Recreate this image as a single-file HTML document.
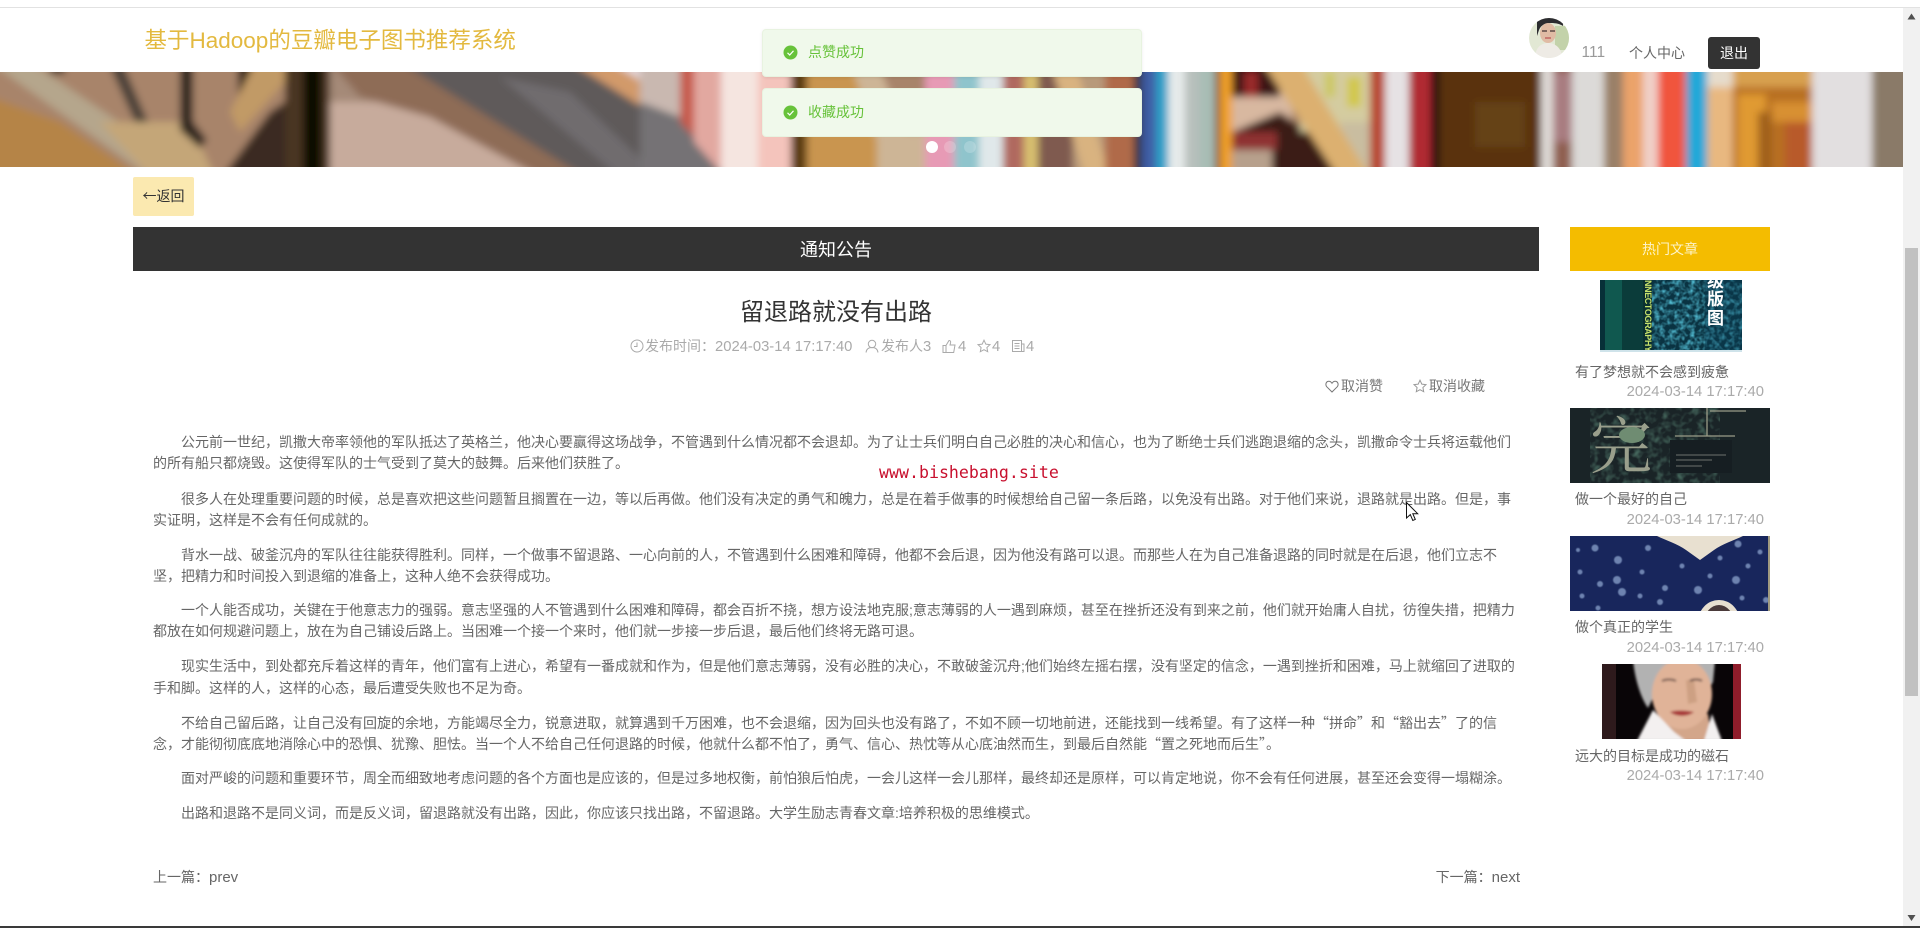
<!DOCTYPE html>
<html lang="zh-CN">
<head>
<meta charset="utf-8">
<title>留退路就没有出路</title>
<style>
html,body{margin:0;padding:0;background:#fff;}
body{position:relative;width:1920px;height:928px;overflow:hidden;font-family:"Liberation Sans","Noto Sans CJK SC",sans-serif;}
.a{position:absolute;white-space:nowrap;}
.l{position:absolute;white-space:nowrap;font-size:14px;line-height:20px;color:#666;left:153px;}
.i{left:181px;}
.m{position:absolute;white-space:nowrap;font-size:14px;line-height:20px;color:#aaa;top:336px;}
.m b{font-weight:normal;font-size:14.8px;}
.t{position:absolute;white-space:nowrap;font-size:14px;line-height:20px;color:#666;left:1575px;}
.d{position:absolute;white-space:nowrap;font-size:14.8px;line-height:20px;color:#aaa;right:156px;}
.q{font-family:"Noto Sans CJK SC",sans-serif;}
svg{position:absolute;display:block;}
.ic{fill:none;stroke:#aaa;stroke-width:1;}
</style>
</head>
<body>

<!-- top strip -->
<div class="a" style="left:0;top:7px;width:1920px;height:1px;background:#e2e2e2"></div>

<!-- banner -->
<svg style="left:0;top:72px" width="1903" height="95" viewBox="0 0 1903 95">
<defs><filter id="bl" x="-5%" y="-30%" width="110%" height="160%"><feGaussianBlur stdDeviation="4"/></filter></defs>
<g filter="url(#bl)">
<rect x="-10" y="-10" width="1930" height="115" fill="#a8846a"/>
<polygon points="-10,25 60,50 140,105 -10,105" fill="#b58446"/>
<polygon points="-10,-10 30,-10 200,105 150,105" fill="#b5a68c"/>
<polygon points="100,50 190,50 215,105 150,105" fill="#c4a678"/>
<polygon points="108,-10 122,-10 148,50 135,50" fill="#4a4038"/>
<rect x="50" y="-10" width="15" height="12" fill="#3c342c"/>
<path d="M180 -10h13v60l14 18-7 8-20-18z" fill="#2b241b"/>
<rect x="238" y="-10" width="14" height="34" fill="#2d2317"/>
<polygon points="255,-10 285,-10 285,10 240,60 230,40" fill="#c19a66"/>
<polygon points="222,105 270,40 285,30 285,105" fill="#3a2a20"/>
<rect x="285" y="-10" width="45" height="115" fill="#4a3620"/>
<rect x="303" y="-10" width="19" height="115" fill="#0c0a05"/>
<rect x="330" y="-10" width="110" height="115" fill="#a58a78"/>
<polygon points="330,30 420,30 560,105 330,105" fill="#c7ab9c"/>
<polygon points="330,-10 430,-10 610,105 540,105 430,45 360,25" fill="#8e6c56"/>
<polygon points="400,-10 590,-10 740,105 585,105" fill="#5e5a5a"/>
<polygon points="500,5 570,20 660,105 620,105" fill="#6f6c6e"/>
<polygon points="570,-10 700,-10 700,70 650,40" fill="#d29a6a"/>
<polygon points="610,-10 700,-10 700,45" fill="#e3d6d8"/>
<rect x="640" y="-10" width="42" height="60" fill="#c9b8b0"/>
<polygon points="640,30 680,45 735,105 640,105" fill="#757275"/>
<polygon points="680,-10 694,-10 694,65 680,50" fill="#c65a4c"/>
<polygon points="694,-10 721,-10 721,105 725,105 694,70" fill="#e2a8a0"/>
<rect x="721" y="-10" width="37" height="115" fill="#f5e5e0"/>
<rect x="758" y="-10" width="33" height="115" fill="#f4c4bc"/>
<rect x="791" y="-10" width="16" height="115" fill="#5a3a10"/>
<rect x="807" y="-10" width="70" height="115" fill="#c9954f"/>
<polygon points="850,-10 877,-10 925,105 890,105" fill="#cdb596"/>
<rect x="877" y="60" width="48" height="45" fill="#cdb596"/>
<rect x="925" y="-10" width="29" height="115" fill="#e79ab5"/>
<rect x="954" y="-10" width="25" height="115" fill="#8fc4cc"/>
<rect x="979" y="-10" width="24" height="115" fill="#e0e8ea"/>
<rect x="1003" y="-10" width="21" height="115" fill="#b0695e"/>
<rect x="1024" y="-10" width="14" height="115" fill="#d8c070"/>
<rect x="1038" y="-10" width="35" height="115" fill="#7f5a50"/>
<rect x="1073" y="-10" width="32" height="115" fill="#b89a7a"/>
<polygon points="1050,-10 1075,-10 1110,105 1085,105" fill="#d9b380"/>
<rect x="1105" y="-10" width="29" height="115" fill="#b06a48"/>
<rect x="1134" y="-10" width="8" height="115" fill="#2b3340"/>
<rect x="1142" y="-10" width="14" height="115" fill="#3f5da5"/>
<rect x="1156" y="-10" width="12" height="115" fill="#2aa0c8"/>
<rect x="1168" y="-10" width="17" height="115" fill="#e6eaea"/>
<rect x="1185" y="-10" width="14" height="115" fill="#b8c0bc"/>
<rect x="1199" y="-10" width="16" height="115" fill="#a8bdb5"/>
<rect x="1215" y="-10" width="5" height="115" fill="#7a4a20"/>
<rect x="1220" y="-10" width="12" height="115" fill="#f0a02a"/>
<rect x="1232" y="-10" width="60" height="115" fill="#d8b8a0"/>
<rect x="1232" y="-10" width="48" height="35" fill="#3a1414"/>
<rect x="1244" y="0" width="14" height="25" fill="#9a2a2a"/>
<polygon points="1232,60 1280,40 1330,75 1340,105 1232,105" fill="#3a1a14"/>
<rect x="1232" y="78" width="40" height="30" fill="#b7a08c"/>
<rect x="1232" y="60" width="45" height="18" fill="#8f3030"/>
<rect x="1300" y="-10" width="70" height="70" fill="#d4cca0"/>
<rect x="1325" y="0" width="10" height="25" fill="#ccc860"/>
<rect x="1347" y="5" width="14" height="30" fill="#d2c84a"/>
<polygon points="1340,50 1370,50 1370,105 1350,105" fill="#c9bda0"/>
<polygon points="1262,-10 1300,-10 1370,105 1338,105" fill="#dcb070"/>
<rect x="1370" y="-10" width="15" height="115" fill="#b8452f"/>
<rect x="1385" y="-10" width="24" height="115" fill="#e6e2e4"/>
<rect x="1409" y="-10" width="22" height="115" fill="#b02a30"/>
<rect x="1431" y="-10" width="8" height="115" fill="#100808"/>
<rect x="1439" y="-10" width="102" height="115" fill="#5a3208"/>
<rect x="1475" y="30" width="50" height="45" fill="#6a4a20" opacity=".7"/>
<rect x="1541" y="-10" width="12" height="115" fill="#e0dcd8"/>
<rect x="1553" y="-10" width="19" height="115" fill="#8f5f50"/>
<rect x="1553" y="0" width="19" height="70" fill="#a87c80"/>
<rect x="1572" y="-10" width="32" height="115" fill="#dcdad8"/>
<rect x="1604" y="-10" width="19" height="115" fill="#9a8068"/>
<rect x="1623" y="-10" width="20" height="115" fill="#eba36a"/>
<rect x="1643" y="-10" width="15" height="115" fill="#f0d0c8"/>
<rect x="1658" y="-10" width="28" height="115" fill="#f0543c"/>
<rect x="1686" y="-10" width="21" height="115" fill="#20a8d8"/>
<rect x="1707" y="-10" width="26" height="115" fill="#e8b880"/>
<rect x="1707" y="-10" width="26" height="25" fill="#e6dccc"/>
<rect x="1733" y="-10" width="79" height="115" fill="#b87020"/>
<rect x="1733" y="-10" width="79" height="25" fill="#d8a050"/>
<rect x="1738" y="22" width="28" height="83" fill="#e09a30"/>
<rect x="1758" y="40" width="14" height="65" fill="#a0601c"/>
<rect x="1772" y="30" width="40" height="20" fill="#d89030"/>
<rect x="1785" y="50" width="27" height="55" fill="#b85a2a"/>
<rect x="1812" y="-10" width="60" height="115" fill="#e2dfe0"/>
<rect x="1872" y="-10" width="40" height="115" fill="#8a7a68"/>
</g>
</svg>

<!-- carousel dots -->
<div class="a" style="left:926px;top:141px;width:12px;height:12px;border-radius:50%;background:#fff"></div>
<div class="a" style="left:944px;top:141px;width:12px;height:12px;border-radius:50%;background:rgba(255,255,255,.2)"></div>
<div class="a" style="left:964px;top:141px;width:12px;height:12px;border-radius:50%;background:rgba(255,255,255,.2)"></div>

<!-- header -->
<div class="a" style="left:144.5px;top:26px;font-size:22.5px;line-height:30px;color:#e3b93f">基于Hadoop的豆瓣电子图书推荐系统</div>

<svg style="left:1529px;top:18px" width="40" height="40" viewBox="0 0 40 40">
<defs><clipPath id="av"><circle cx="20" cy="20" r="20"/></clipPath></defs>
<g clip-path="url(#av)">
<rect width="40" height="40" fill="#e2e8d4"/>
<rect x="26" y="8" width="14" height="24" fill="#c3d2aa"/>
<path d="M8 0h26v8c-3-2-7-3-12-3-6 0-10 2-12 7l-2 6z" fill="#2c2c30"/>
<ellipse cx="19" cy="15" rx="8" ry="10" fill="#e0bba4"/>
<path d="M13 13h5M21 13h5" stroke="#433" stroke-width="1.300"/>
<path d="M16 20h6" stroke="#b55" stroke-width="1.200"/>
<path d="M6 40c0-10 6-15 13-15s14 5 14 15z" fill="#eeebe5"/>
</g>
</svg>
<div class="a" style="left:1581.500px;top:43px;font-size:15.500px;line-height:20px;color:#999">111</div>
<div class="a" style="left:1629px;top:43px;font-size:14px;line-height:20px;color:#666">个人中心</div>
<div class="a" style="left:1708px;top:37px;width:52px;height:32px;background:#333;border-radius:3px;color:#fff;font-size:14px;line-height:32px;text-align:center">退出</div>

<!-- notifications -->
<div class="a" style="left:762px;top:29px;width:378px;height:46px;background:#f0f9eb;border:1px solid #e8f3e0;border-radius:4px;box-shadow:0 1px 3px rgba(0,0,0,.08)"></div>
<svg style="left:783px;top:45px" width="15" height="15" viewBox="0 0 15 15"><circle cx="7.500" cy="7.500" r="7" fill="#67c23a"/><path d="M4.500 7.800l2.200 2.200 3.800-4.200" fill="none" stroke="#fff" stroke-width="1.200"/></svg>
<div class="a" style="left:808px;top:42px;font-size:14px;line-height:20px;color:#67c23a">点赞成功</div>
<div class="a" style="left:762px;top:88px;width:378px;height:47px;background:#f0f9eb;border:1px solid #e8f3e0;border-radius:4px"></div>
<svg style="left:783px;top:105px" width="15" height="15" viewBox="0 0 15 15"><circle cx="7.500" cy="7.500" r="7" fill="#67c23a"/><path d="M4.500 7.800l2.200 2.200 3.800-4.200" fill="none" stroke="#fff" stroke-width="1.200"/></svg>
<div class="a" style="left:808px;top:102px;font-size:14px;line-height:20px;color:#67c23a">收藏成功</div>

<!-- back -->
<div class="a" style="left:133px;top:177px;width:61px;height:39px;background:#fbe9b0;color:#333;font-size:14px;line-height:39px;text-align:center;border-radius:2px"><span class="q">←</span>返回</div>

<!-- bars -->
<div class="a" style="left:133px;top:228px;width:1406px;height:44px;color:#fff;font-size:18px;line-height:44px;text-align:center;z-index:2">通知公告</div>
<div class="a" style="left:133px;top:227px;width:1406px;height:44px;background:#333"></div>
<div class="a" style="left:1570px;top:227px;width:200px;height:44px;background:#f4bc00;color:#fdf3c8;font-size:14px;line-height:44px;text-align:center">热门文章</div>

<!-- article head -->
<div class="a" style="left:133px;width:1406px;top:296px;font-size:24px;line-height:34px;color:#333;text-align:center">留退路就没有出路</div>

<svg class="ic" style="left:630px;top:339px" width="14" height="14" viewBox="0 0 14 14"><circle cx="7" cy="7" r="6"/><path d="M7 3.500V7.500H4"/></svg>
<div class="m" style="left:645px">发布时间：<b>2024-03-14 17:17:40</b></div>
<svg class="ic" style="left:865px;top:339px" width="14" height="14" viewBox="0 0 14 14"><circle cx="7" cy="5" r="3.700"/><path d="M1 13.500c.5-3.800 3-5 6-5s5.500 1.200 6 5"/></svg>
<div class="m" style="left:881px">发布人<b>3</b></div>
<svg class="ic" style="left:942px;top:339px" width="14" height="14" viewBox="0 0 14 14"><path d="M1 6.500h3v7H1zM4 6.500l3-5c1.500 0 2 1 1.500 2.500l-.5 2h5l-1.300 7.500H4"/></svg>
<div class="m" style="left:958px"><b>4</b></div>
<svg class="ic" style="left:977px;top:339px" width="14" height="14" viewBox="0 0 14 14"><path d="M7 1.200l1.800 3.900 4.200.5-3.100 2.900.8 4.200L7 10.700 3.300 12.700l.8-4.200L1 5.600l4.200-.5z"/></svg>
<div class="m" style="left:992px"><b>4</b></div>
<svg class="ic" style="left:1011px;top:339px" width="14" height="14" viewBox="0 0 14 14"><path d="M1.500 1.500h9v11h-9zM10.500 5h2.500v7.500h-2.500M3.500 4.500h5M3.500 7h5M3.500 9.500h5"/></svg>
<div class="m" style="left:1026px"><b>4</b></div>

<svg style="left:1325px;top:380px" width="14" height="13" viewBox="0 0 14 13"><path d="M7 12L1.800 6.800C.2 5 .8 2 3 1.400 4.800 1 6.200 2 7 3.300 7.800 2 9.200 1 11 1.400c2.200.6 2.800 3.600 1.200 5.400z" fill="none" stroke="#777" stroke-width="1"/></svg>
<div class="a" style="left:1341px;top:376px;font-size:14px;line-height:20px;color:#777">取消赞</div>
<svg style="left:1413px;top:379px" width="14" height="14" viewBox="0 0 14 14"><path d="M7 1.200l1.800 3.900 4.200.5-3.100 2.900.8 4.200L7 10.700 3.300 12.700l.8-4.200L1 5.600l4.200-.5z" fill="none" stroke="#999" stroke-width="1"/></svg>
<div class="a" style="left:1429px;top:376px;font-size:14px;line-height:20px;color:#777">取消收藏</div>

<!-- body -->
<div class="l i" style="top:432px">公元前一世纪，凯撒大帝率领他的军队抵达了英格兰，他决心要赢得这场战争，不管遇到什么情况都不会退却。为了让士兵们明白自己必胜的决心和信心，也为了断绝士兵们逃跑退缩的念头，凯撒命令士兵将运载他们</div>
<div class="l" style="top:453px">的所有船只都烧毁。这使得军队的士气受到了莫大的鼓舞。后来他们获胜了。</div>
<div class="l i" style="top:489px">很多人在处理重要问题的时候，总是喜欢把这些问题暂且搁置在一边，等以后再做。他们没有决定的勇气和魄力，总是在着手做事的时候想给自己留一条后路，以免没有出路。对于他们来说，退路就是出路。但是，事</div>
<div class="l" style="top:510px">实证明，这样是不会有任何成就的。</div>
<div class="l i" style="top:544.500px">背水一战、破釜沉舟的军队往往能获得胜利。同样，一个做事不留退路、一心向前的人，不管遇到什么困难和障碍，他都不会后退，因为他没有路可以退。而那些人在为自己准备退路的同时就是在后退，他们立志不</div>
<div class="l" style="top:566px">坚，把精力和时间投入到退缩的准备上，这种人绝不会获得成功。</div>
<div class="l i" style="top:600px">一个人能否成功，关键在于他意志力的强弱。意志坚强的人不管遇到什么困难和障碍，都会百折不挠，想方设法地克服;意志薄弱的人一遇到麻烦，甚至在挫折还没有到来之前，他们就开始庸人自扰，彷徨失措，把精力</div>
<div class="l" style="top:621px">都放在如何规避问题上，放在为自己铺设后路上。当困难一个接一个来时，他们就一步接一步后退，最后他们终将无路可退。</div>
<div class="l i" style="top:656px">现实生活中，到处都充斥着这样的青年，他们富有上进心，希望有一番成就和作为，但是他们意志薄弱，没有必胜的决心，不敢破釜沉舟;他们始终左摇右摆，没有坚定的信念，一遇到挫折和困难，马上就缩回了进取的</div>
<div class="l" style="top:678px">手和脚。这样的人，这样的心态，最后遭受失败也不足为奇。</div>
<div class="l i" style="top:712.500px">不给自己留后路，让自己没有回旋的余地，方能竭尽全力，锐意进取，就算遇到千万困难，也不会退缩，因为回头也没有路了，不如不顾一切地前进，还能找到一线希望。有了这样一种<span class="q">“</span>拼命<span class="q">”</span>和<span class="q">“</span>豁出去<span class="q">”</span>了的信</div>
<div class="l" style="top:734px">念，才能彻彻底底地消除心中的恐惧、犹豫、胆怯。当一个人不给自己任何退路的时候，他就什么都不怕了，勇气、信心、热忱等从心底油然而生，到最后自然能<span class="q">“</span>置之死地而后生<span class="q">”</span>。</div>
<div class="l i" style="top:768px">面对严峻的问题和重要环节，周全而细致地考虑问题的各个方面也是应该的，但是过多地权衡，前怕狼后怕虎，一会儿这样一会儿那样，最终却还是原样，可以肯定地说，你不会有任何进展，甚至还会变得一塌糊涂。</div>
<div class="l i" style="top:803px">出路和退路不是同义词，而是反义词，留退路就没有出路，因此，你应该只找出路，不留退路。大学生励志青春文章:培养积极的思维模式。</div>
<div class="l" style="top:867px">上一篇：<span style="font-size:15px">prev</span></div>
<div class="a" style="right:400px;top:867px;font-size:14px;line-height:20px;color:#666">下一篇：<span style="font-size:15px">next</span></div>

<!-- watermark -->
<div class="a" style="left:879px;top:463px;font-family:'DejaVu Sans Mono',monospace;font-size:16.600px;line-height:20px;color:#c8102e">www.bishebang.site</div>

<!-- sidebar images -->
<svg style="left:1600px;top:280px" width="142" height="72" viewBox="0 0 142 72">
<defs><filter id="tu" x="0" y="0" width="100%" height="100%"><feTurbulence type="fractalNoise" baseFrequency=".2" numOctaves="2" seed="4"/><feColorMatrix values="0 0 0 0 .08  0 0 0 0 .48  0 0 0 0 .62  2.200 0 0 0 -.85"/></filter></defs>
<rect width="142" height="72" fill="#0a3342"/>
<rect width="142" height="72" filter="url(#tu)"/>
<rect x="0" y="0" width="5" height="72" fill="#073038"/>
<rect x="5" y="0" width="17" height="72" fill="#10584f"/>
<rect x="22" y="0" width="21" height="72" fill="#0b3c3a"/>
<rect x="43" y="0" width="9" height="72" fill="#0b3030"/>
<text transform="translate(45,0) rotate(90)" font-family="Liberation Sans" font-size="9" font-weight="bold" fill="#c7e26b" textLength="72">NNECTOGRAPHY</text>
<rect x="105" y="0" width="37" height="72" fill="#0a3c52" opacity=".4"/>
<text x="107" y="7" font-family="'Noto Sans CJK SC'" font-size="17" font-weight="bold" fill="#fff">级</text>
<text x="107" y="25" font-family="'Noto Sans CJK SC'" font-size="17" font-weight="bold" fill="#fff">版</text>
<text x="107" y="44" font-family="'Noto Sans CJK SC'" font-size="17" font-weight="bold" fill="#fff">图</text>
<rect y="70" width="142" height="2" fill="#cfe3ea"/>
</svg>
<svg style="left:1570px;top:408px" width="200" height="75" viewBox="0 0 200 75">
<defs><filter id="tg" x="0" y="0" width="100%" height="100%"><feTurbulence type="fractalNoise" baseFrequency=".14" numOctaves="2" seed="8"/><feColorMatrix values="0 0 0 0 .1  0 0 0 0 .24  0 0 0 0 .18  1.500 0 0 0 -.65"/></filter></defs>
<rect width="200" height="75" fill="#1a2427"/>
<rect x="20" width="130" height="75" filter="url(#tg)"/>
<rect x="100" y="32" width="62" height="33" fill="#161e22"/>
<text x="20" y="60" font-family="'Noto Serif CJK SC'" font-size="62" fill="#9a9f8c">完</text>
<ellipse cx="62" cy="27" rx="13" ry="8" fill="#6f8c72"/>
<path d="M105 28h60M137 0v28M140 3h36" stroke="#9a9c88" stroke-width="1.300" fill="none"/>
<path d="M106 47h50M106 52h36M106 58h26" stroke="#5e625f" stroke-width="1.300" fill="none"/>
</svg>
<svg style="left:1570px;top:536px" width="200" height="75" viewBox="0 0 200 75">
<defs><filter id="bf"><feGaussianBlur stdDeviation=".6"/></filter></defs>
<rect width="200" height="75" fill="#18265c"/>
<g fill="#7e94bf" filter="url(#bf)" opacity=".85">
<circle cx="25" cy="12" r="3.500"/><circle cx="48" cy="24" r="4"/><circle cx="10" cy="36" r="2.500"/><circle cx="30" cy="48" r="3"/><circle cx="47" cy="44" r="4"/><circle cx="12" cy="60" r="2.500"/><circle cx="52" cy="56" r="4"/><circle cx="90" cy="66" r="3"/><circle cx="72" cy="36" r="2.500"/><circle cx="95" cy="52" r="3"/><circle cx="128" cy="54" r="4"/><circle cx="166" cy="44" r="4"/><circle cx="168" cy="8" r="3.500"/><circle cx="190" cy="16" r="2.500"/><circle cx="178" cy="30" r="2.500"/><circle cx="150" cy="22" r="2.500"/><circle cx="196" cy="64" r="3"/><circle cx="172" cy="62" r="2.500"/><circle cx="28" cy="72" r="2.500"/><circle cx="112" cy="30" r="2.500"/><circle cx="140" cy="40" r="2.500"/><circle cx="78" cy="12" r="3"/><circle cx="8" cy="14" r="2"/><circle cx="70" cy="60" r="2.500"/>
</g>
<rect x="198" width="2" height="75" fill="#a09a80"/>
<path d="M87 0H173C165 4 152 8 144 14L130 24 116 14C108 8 95 4 87 0z" fill="#e8e0d0"/>
<ellipse cx="149" cy="86" rx="21" ry="22" fill="#e8e0d0"/>
<ellipse cx="149" cy="87" rx="15" ry="18" fill="#4a3a3a"/>
</svg>
<svg style="left:1602px;top:664px" width="139" height="75" viewBox="0 0 139 75">
<defs><filter id="bw"><feGaussianBlur stdDeviation="1.400"/></filter></defs>
<rect width="139" height="75" fill="#090507"/>
<rect width="14" height="75" fill="#2e1a1c"/>
<rect x="131" width="8" height="75" fill="#8f1d2b"/>
<g filter="url(#bw)">
<path d="M31 -4h82l-2 22-8 14H52l-6 12c-7-10-13-28-15-48z" fill="#b2b2b2"/>
<path d="M58 50h48l4 27H72z" fill="#d3a68a"/>
<ellipse cx="80" cy="30" rx="30" ry="35" fill="#e0b398"/>
<polygon points="84,16 92,16 95,38 86,40" fill="#cda083"/>
<path d="M60 17c4-2 10-2 14 0M88 17c3-2 9-2 12 0" stroke="#6a5048" stroke-width="2" fill="none"/>
<path d="M68 48c6-2 14-2 24 0-6 5-18 5-24 0z" fill="#a83838"/>
<polygon points="35,77 51,46 72,68 84,77" fill="#f3f0f0"/>
<polygon points="110,50 120,77 102,77" fill="#f3f0f0"/>
</g>
</svg>

<div class="t" style="top:362px">有了梦想就不会感到疲惫</div>
<div class="d" style="top:382px">2024-03-14 17:17:40</div>
<div class="t" style="top:489px">做一个最好的自己</div>
<div class="d" style="top:510px">2024-03-14 17:17:40</div>
<div class="t" style="top:617px">做个真正的学生</div>
<div class="d" style="top:638px">2024-03-14 17:17:40</div>
<div class="t" style="top:746px">远大的目标是成功的磁石</div>
<div class="d" style="top:766px">2024-03-14 17:17:40</div>

<!-- scrollbar -->
<div class="a" style="left:1903px;top:8px;width:17px;height:918px;background:#f1f1f1"></div>
<div class="a" style="left:1905px;top:248px;width:13px;height:448px;background:#c1c1c1"></div>
<svg style="left:1903px;top:8px" width="17" height="17"><path d="M8.500 5.500L12.500 11.500H4.500z" fill="#505050"/></svg>
<svg style="left:1903px;top:909px" width="17" height="17"><path d="M4.500 6H12.500L8.500 12z" fill="#505050"/></svg>

<!-- bottom edge -->
<div class="a" style="left:0;top:926px;width:1920px;height:2px;background:#3a3a3a"></div>

<!-- cursor -->
<svg style="left:1405.500px;top:502px" width="14" height="20" viewBox="0 0 14 20"><path d="M.5.500V16L4.300 12.600 6.800 18.500 9.300 17.400 6.800 11.700H11.700z" fill="#fff" stroke="#111" stroke-width="1"/></svg>

</body>
</html>
